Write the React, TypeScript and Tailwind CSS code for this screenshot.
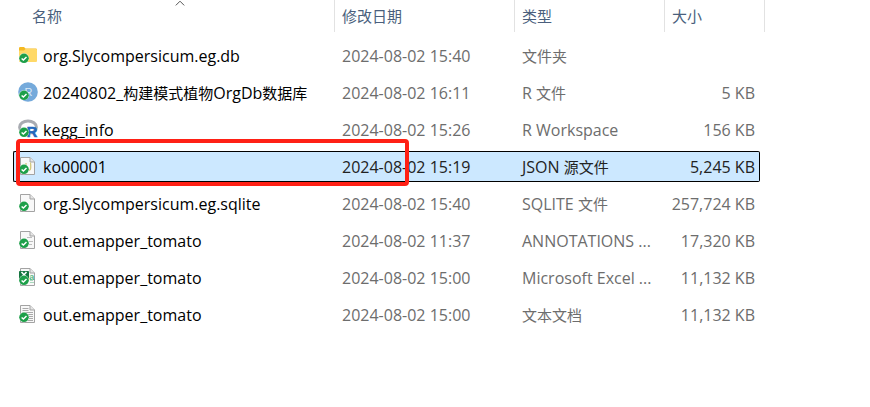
import React, { useState } from 'react';
import clsx from 'clsx';

type IconKind = 'folder' | 'rfile' | 'rworkspace' | 'json' | 'blank' | 'lines' | 'excel' | 'text';

type FileRow = {
  icon: IconKind;
  name: string;
  date: string;
  type: string;
  size: string;
};

const files: FileRow[] = [
  { icon: 'folder', name: 'org.Slycompersicum.eg.db', date: '2024-08-02 15:40', type: '文件夹', size: '' },
  { icon: 'rfile', name: '20240802_构建模式植物OrgDb数据库', date: '2024-08-02 16:11', type: 'R 文件', size: '5 KB' },
  { icon: 'rworkspace', name: 'kegg_info', date: '2024-08-02 15:26', type: 'R Workspace', size: '156 KB' },
  { icon: 'json', name: 'ko00001', date: '2024-08-02 15:19', type: 'JSON 源文件', size: '5,245 KB' },
  { icon: 'blank', name: 'org.Slycompersicum.eg.sqlite', date: '2024-08-02 15:40', type: 'SQLITE 文件', size: '257,724 KB' },
  { icon: 'lines', name: 'out.emapper_tomato', date: '2024-08-02 11:37', type: 'ANNOTATIONS ...', size: '17,320 KB' },
  { icon: 'excel', name: 'out.emapper_tomato', date: '2024-08-02 15:00', type: 'Microsoft Excel ...', size: '11,132 KB' },
  { icon: 'text', name: 'out.emapper_tomato', date: '2024-08-02 15:00', type: '文本文档', size: '11,132 KB' },
];

// Chinese runs are set one pixel smaller than the Latin text
const Mixed = ({ text }: { text: string }) => (
  <>
    {text.split(/([\u4e00-\u9fff]+)/).map((part, i) =>
      i % 2 ? <span key={i} className="text-[15px]">{part}</span> : part
    )}
  </>
);

const Page = () => (
  <>
    <path d="M2.5 1.500h9.500l4.500 4.500v12.500H2.500z" fill="#f8f8f8" stroke="#a3a3a3" />
    <path d="M12 1.500v4.500h4.500" fill="#e6e6e6" stroke="#a3a3a3" />
  </>
);

const FileIcon = ({ kind }: { kind: IconKind }) => (
  <svg viewBox="0 0 20 20" className="mt-1 h-5 w-5 shrink-0" aria-hidden="true">
    {kind === 'folder' && <>
      <path d="M1 3.2Q1 2 2.2 2H6L7.500 3.500H17.8Q19 3.500 19 4.700V8H1z" fill="#f5b921" />
      <path d="M1 5.500H6L7.500 4H18Q19 4 19 5V16Q19 17 18 17H2Q1 17 1 16z" fill="#ffd968" />
    </>}
    {kind === 'rfile' && <>
      <circle cx="10" cy="10" r="9.8" fill="#75aadb" />
      <text x="6.5" y="13.5" fontSize="11" fontFamily="Liberation Sans, sans-serif" fill="#dcebf8">R</text>
    </>}
    {kind === 'rworkspace' && <>
      <ellipse cx="10" cy="8.2" rx="8.4" ry="6.2" fill="none" stroke="#a8abb1" strokeWidth="3" />
      <text x="8.5" y="17.5" fontSize="15" fontWeight="bold" fontFamily="Liberation Sans, sans-serif" fill="#2368bd" stroke="#2368bd" strokeWidth="0.5">R</text>
    </>}
    {kind === 'json' && <>
      <Page />
      <path d="M8 7V9.5M12 7Q12.7 7 12.7 8.500V12Q12.7 14 11 14.500" fill="none" stroke="#d3c77a" strokeWidth="1.3" />
    </>}
    {kind === 'blank' && <Page />}
    {kind === 'lines' && <>
      <Page />
      <path d="M9 7.500h5M5 9.500h4M11 11.500h4M11 14.500h3" stroke="#bdbdbd" />
    </>}
    {kind === 'text' && <>
      <Page />
      <path d="M4.500 4.500h6M4.500 6.500h6M4.500 8.500h10.500M9 10.500h6M11 12.500h4M11 14.500h4M10 16.500h5" stroke="#a9a9a9" />
    </>}
    {kind === 'excel' && <>
      <Page />
      <path d="M12 15.500h4M12 13.500h3" stroke="#a9d8bd" />
      <rect x="1" y="4" width="10" height="11" rx="0.8" fill="#15753f" />
      <path d="M3.5 5L8.5 10.5M8.5 5L3.5 10.5" stroke="#fff" strokeWidth="1.6" />
      <text x="11.3" y="13" fontSize="9" fontWeight="bold" fontFamily="Liberation Sans, sans-serif" fill="#55b883">a</text>
    </>}
    {/* synced badge */}
    <circle cx="6" cy="13.3" r="5" fill="#fff" />
    <circle cx="6" cy="13.3" r="4.8" fill="#1d9f49" />
    <path d="M3.6 13.4L5.4 15.1L8.5 11.9" fill="none" stroke="#fff" strokeWidth="1.4" />
  </svg>
);

const HeaderCell = ({ label, className, sorted }: { label: string; className?: string; sorted?: boolean }) => (
  <th scope="col" className="h-[34px] p-0 text-left align-top font-normal">
    <button className={clsx('relative flex h-8 w-full items-center text-[15px] text-[#4a5f7d]', className)}>
      {label}
      {sorted && (
        <svg viewBox="0 0 10 6" className="absolute top-0 left-[162px] h-1.5 w-2.5" aria-hidden="true">
          <path d="M0.8 5.4L5 1.2L9.2 5.4" fill="none" stroke="#555" strokeWidth="1" />
        </svg>
      )}
    </button>
  </th>
);

const App = () => {
  const [selected, setSelected] = useState(3);
  return <main className="min-h-screen bg-white pl-[13px] font-['Open_Sans','Noto_Sans_CJK_SC',sans-serif] text-[16px] leading-5">
      <table className="-mt-1.5 w-[752px] table-fixed border-separate border-spacing-x-0 border-spacing-y-1.5">
        <colgroup>
          <col className="w-[322px]" />
          <col className="w-[180px]" />
          <col className="w-[150px]" />
          <col className="w-[95px]" />
          <col className="w-[5px]" />
        </colgroup>
        <thead>
          <tr>
            <HeaderCell label="名称" className="border-r border-[#e2e2e2] pl-[19px]" sorted />
            <HeaderCell label="修改日期" className="border-r border-[#e2e2e2] pl-[7px]" />
            <HeaderCell label="类型" className="border-r border-[#e2e2e2] pl-[7px]" />
            <HeaderCell label="大小" className="pl-[7px]" />
            <td className="p-0 align-top"><div className="h-8 border-r border-[#e2e2e2]" /></td>
          </tr>
        </thead>
        <tbody>
          {files.map((file, i) => {
            const active = i === selected;
            const cell = clsx('flex h-[31px] whitespace-nowrap border-y', active ? 'border-black bg-[#cce8ff] text-[#222]' : 'border-transparent text-[#6d6d6d]');
            return <tr key={i} onClick={() => setSelected(i)} aria-selected={active}>
                <td className="p-0">
                  <div className={clsx(cell, 'relative gap-[5px] rounded-l-xs border-l pl-1')}>
                    <FileIcon kind={file.icon} />
                    <span className="self-center text-black"><Mixed text={file.name} /></span>
                    {/* highlight frame around the json file */}
                    {file.icon === 'json' && (
                      <div className="pointer-events-none absolute -top-[13px] left-0.5 z-10 h-[47px] w-[393px] rounded-sm border-4 border-[#ff2015]" />
                    )}
                  </div>
                </td>
                <td className="p-0"><div className={clsx(cell, 'items-center pl-[7px]')}>{file.date}</div></td>
                <td className="p-0"><div className={clsx(cell, 'items-center pl-[7px]')}><span><Mixed text={file.type} /></span></div></td>
                <td className="p-0"><div className={clsx(cell, 'items-center justify-end rounded-r-xs border-r pr-1')}>{file.size}</div></td>
                <td className="p-0" />
              </tr>;
          })}
        </tbody>
      </table>
    </main>;
};
export default App;
